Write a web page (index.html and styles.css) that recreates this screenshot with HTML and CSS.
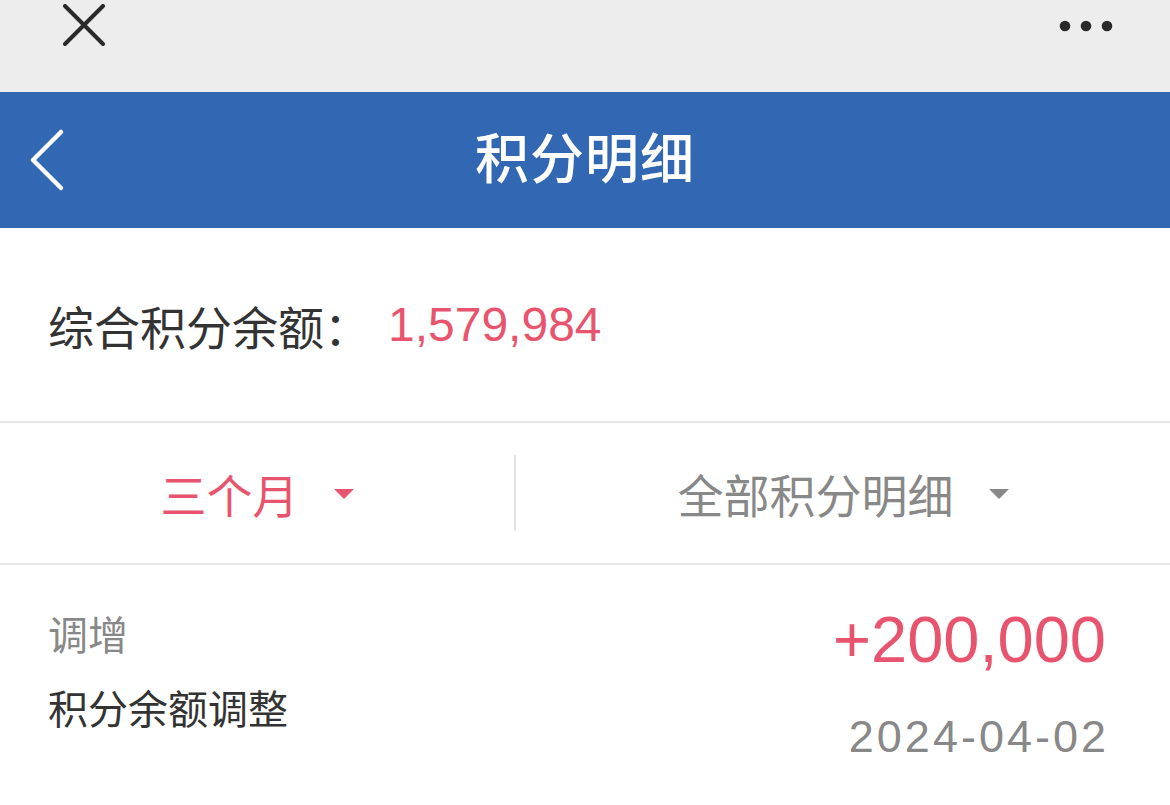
FILE: index.html
```html
<!DOCTYPE html>
<html lang="zh-CN">
<head>
    <meta charset="UTF-8">
    <meta name="viewport" content="width=device-width, initial-scale=1.0">
    <title>积分明细</title>
    <link rel="stylesheet" href="styles.css">
</head>
<body>

    <div class="topbar">
        <svg class="close-icon" width="42" height="42" viewBox="0 0 42 42">
            <path d="M2 2 L40 40 M40 2 L2 40" stroke="#2a2a2a" stroke-width="4" stroke-linecap="round" fill="none"/>
        </svg>
        <svg class="more-icon" width="54" height="12" viewBox="0 0 54 12">
            <circle cx="6" cy="6" r="5.3" fill="#2a2a2a"/>
            <circle cx="27" cy="6" r="5.3" fill="#2a2a2a"/>
            <circle cx="48" cy="6" r="5.3" fill="#2a2a2a"/>
        </svg>
    </div>

    <header class="navbar">
        <div class="nav-left">
            <svg class="back-icon" width="40" height="64" viewBox="0 0 40 64">
                <path d="M33 4 L5 32 L33 60" stroke="#fff" stroke-width="4.5" stroke-linecap="round" stroke-linejoin="round" fill="none"/>
            </svg>
        </div>
        <h1 class="nav-title">积分明细</h1>
        <div class="nav-right"></div>
    </header>

    <section class="balance">
        <span class="balance-label">综合积分余额：</span>
        <span class="balance-value">1,579,984</span>
    </section>

    <div class="filters">
        <div class="filter filter-active">
            <span>三个月</span>
            <i class="caret"></i>
        </div>
        <div class="filter-divider"></div>
        <div class="filter">
            <span>全部积分明细</span>
            <i class="caret"></i>
        </div>
    </div>

    <ul class="records">
        <li class="record">
            <div class="record-info">
                <div class="record-type">调增</div>
                <div class="record-desc">积分余额调整</div>
            </div>
            <div class="record-meta">
                <div class="record-amount">+200,000</div>
                <div class="record-date">2024-04-02</div>
            </div>
        </li>
    </ul>

</body>
</html>
```

FILE: styles.css
```css
body {
    margin: 0;
    padding: 0;
    font-family: "Liberation Sans", "Noto Sans CJK SC", sans-serif;
    background-color: #fff;
    color: #333;
}

/* top app bar */
.topbar {
    height: 92px;
    background-color: #ededed;
    display: flex;
    justify-content: space-between;
    align-items: flex-start;
    padding: 4px 57px 0 63px;
    box-sizing: border-box;
}

.more-icon {
    margin-top: 16px;
}

/* blue title bar */
.navbar {
    height: 136px;
    background-color: #3268b3;
    display: grid;
    grid-template-columns: 1fr auto 1fr;
    align-items: center;
}

.nav-left {
    display: flex;
    align-items: center;
    padding-left: 28px;
}

.nav-title {
    margin: 0;
    color: #fff;
    font-size: 54px;
    font-weight: 500;
    line-height: 1;
    letter-spacing: 1px;
}

/* balance */
.balance {
    height: 193px;
    display: flex;
    align-items: center;
    padding: 0 48px;
    border-bottom: 2px solid #e6e6e6;
}

.balance-label {
    font-size: 46px;
    color: #333;
}

.balance-value {
    font-size: 48px;
    color: #e8546e;
    margin-left: 18px;
}

/* filters */
.filters {
    height: 140px;
    display: flex;
    align-items: center;
    border-bottom: 2px solid #e6e6e6;
}

.filter {
    display: flex;
    align-items: center;
    justify-content: center;
    gap: 35px;
    font-size: 46px;
    color: #888;
}

.filter:first-child {
    width: 514px;
}

.filter:last-child {
    flex: 1;
}

.filter-active {
    color: #e8546e;
}

.filter-divider {
    width: 2px;
    height: 76px;
    background-color: #e3e3e3;
}

.caret {
    width: 0;
    height: 0;
    border-left: 10px solid transparent;
    border-right: 10px solid transparent;
    border-top: 10px solid currentColor;
    margin-top: 2px;
}

/* records */
.records {
    list-style: none;
    margin: 0;
    padding: 0;
}

.record {
    display: flex;
    justify-content: space-between;
    align-items: flex-start;
    padding: 43px 64px 40px 48px;
}

.record-type {
    font-size: 40px;
    line-height: 56px;
    color: #888;
}

.record-desc {
    font-size: 40px;
    line-height: 56px;
    color: #333;
    margin-top: 18px;
}

.record-meta {
    text-align: right;
}

.record-amount {
    font-size: 65px;
    line-height: 64px;
    color: #e8546e;
}

.record-date {
    font-size: 45px;
    line-height: 50px;
    color: #888;
    letter-spacing: 3px;
    margin-top: 40px;
    margin-right: -3px;
}
```
